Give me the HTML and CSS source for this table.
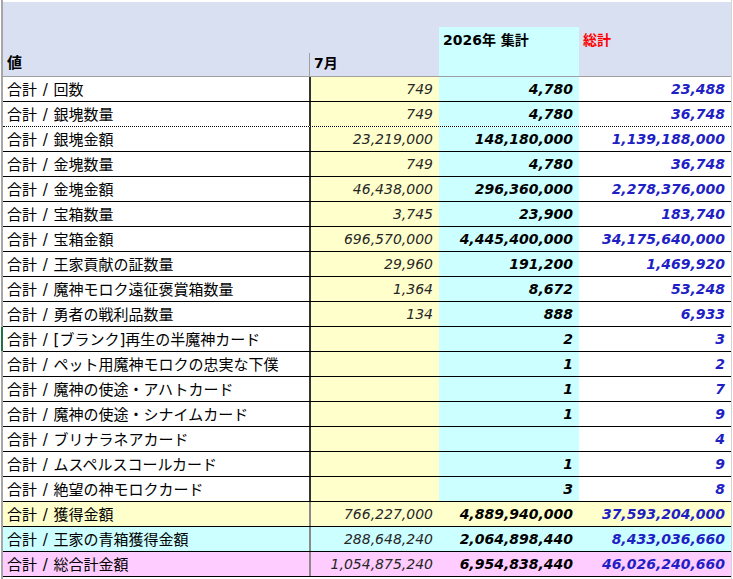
FILE: index.html
```html
<!DOCTYPE html>
<html lang="ja">
<head>
<meta charset="utf-8">
<title>集計</title>
<link rel="stylesheet" href="styles.css">
</head>
<body>
<div class="sheet">
  <div class="head">
    <div class="h h-label">値</div>
    <div class="h h-month">7月</div>
    <div class="h h-top"></div>
    <div class="h h-year">2026年 集計</div>
    <div class="h h-total">総計</div>
  </div>
  <div class="rows">
    <div class="row"><div class="c name">合計 / 回数</div><div class="c m">749</div><div class="c y">4,780</div><div class="c t">23,488</div></div>
    <div class="row dotted"><div class="c name">合計 / 銀塊数量</div><div class="c m">749</div><div class="c y">4,780</div><div class="c t">36,748</div></div>
    <div class="row"><div class="c name">合計 / 銀塊金額</div><div class="c m">23,219,000</div><div class="c y">148,180,000</div><div class="c t">1,139,188,000</div></div>
    <div class="row"><div class="c name">合計 / 金塊数量</div><div class="c m">749</div><div class="c y">4,780</div><div class="c t">36,748</div></div>
    <div class="row"><div class="c name">合計 / 金塊金額</div><div class="c m">46,438,000</div><div class="c y">296,360,000</div><div class="c t">2,278,376,000</div></div>
    <div class="row"><div class="c name">合計 / 宝箱数量</div><div class="c m">3,745</div><div class="c y">23,900</div><div class="c t">183,740</div></div>
    <div class="row"><div class="c name">合計 / 宝箱金額</div><div class="c m">696,570,000</div><div class="c y">4,445,400,000</div><div class="c t">34,175,640,000</div></div>
    <div class="row"><div class="c name">合計 / 王家貢献の証数量</div><div class="c m">29,960</div><div class="c y">191,200</div><div class="c t">1,469,920</div></div>
    <div class="row"><div class="c name">合計 / 魔神モロク遠征褒賞箱数量</div><div class="c m">1,364</div><div class="c y">8,672</div><div class="c t">53,248</div></div>
    <div class="row"><div class="c name">合計 / 勇者の戦利品数量</div><div class="c m">134</div><div class="c y">888</div><div class="c t">6,933</div></div>
    <div class="row"><div class="c name selected">合計 / [ブランク]再生の半魔神カード</div><div class="c m"></div><div class="c y">2</div><div class="c t">3</div></div>
    <div class="row"><div class="c name">合計 / ペット用魔神モロクの忠実な下僕</div><div class="c m"></div><div class="c y">1</div><div class="c t">2</div></div>
    <div class="row"><div class="c name">合計 / 魔神の使途・アハトカード</div><div class="c m"></div><div class="c y">1</div><div class="c t">7</div></div>
    <div class="row"><div class="c name">合計 / 魔神の使途・シナイムカード</div><div class="c m"></div><div class="c y">1</div><div class="c t">9</div></div>
    <div class="row"><div class="c name">合計 / ブリナラネアカード</div><div class="c m"></div><div class="c y"></div><div class="c t">4</div></div>
    <div class="row"><div class="c name">合計 / ムスペルスコールカード</div><div class="c m"></div><div class="c y">1</div><div class="c t">9</div></div>
    <div class="row"><div class="c name">合計 / 絶望の神モロクカード</div><div class="c m"></div><div class="c y">3</div><div class="c t">8</div></div>
    <div class="row sum sum-yellow"><div class="c name">合計 / 獲得金額</div><div class="c m">766,227,000</div><div class="c y">4,889,940,000</div><div class="c t">37,593,204,000</div></div>
    <div class="row sum sum-cyan"><div class="c name">合計 / 王家の青箱獲得金額</div><div class="c m">288,648,240</div><div class="c y">2,064,898,440</div><div class="c t">8,433,036,660</div></div>
    <div class="row sum sum-pink"><div class="c name">合計 / 総合計金額</div><div class="c m">1,054,875,240</div><div class="c y">6,954,838,440</div><div class="c t">46,026,240,660</div></div>
  </div>
</div>
</body>
</html>
```

FILE: styles.css
```css
html, body {
  margin: 0;
  padding: 0;
  background: #ffffff;
}

body {
  font-family: "DejaVu Sans", "Noto Sans CJK JP", sans-serif;
  color: #000000;
}

.sheet {
  margin-left: 1px;
  width: 728px;
  height: 579px;
  border-left: 2px solid #a6a6a6;
  border-right: 1px solid #d4d4d4;
  padding-top: 2px;
  box-sizing: content-box;
}

.head {
  display: grid;
  grid-template-columns: 308px 128px 140px 152px;
  grid-template-rows: 25px 49px;
  background: #d9e0f2;
  border-bottom: 1px solid #a0a0a0;
  font-weight: bold;
  font-size: 14px;
}

.h {
  line-height: 20px;
  white-space: nowrap;
}

.h-label {
  grid-column: 1;
  grid-row: 1 / 3;
  align-self: end;
  padding: 0 0 3px 4px;
  font-size: 15px;
}

.h-month {
  grid-column: 2;
  grid-row: 1 / 3;
  align-self: end;
  padding: 0 0 3px 4px;
  border-left: 1px solid #a0a0a0;
  margin-left: -2px;
}

.h-top {
  grid-column: 3;
  grid-row: 1;
}

.h-year {
  grid-column: 3;
  grid-row: 2;
  background: #ccffff;
  padding: 3px 0 0 4px;
}

.h-total {
  grid-column: 4;
  grid-row: 1 / 3;
  padding: 28px 0 0 4px;
  color: #ff0000;
}

.rows {
  display: flex;
  flex-direction: column;
}

.row {
  display: grid;
  grid-template-columns: 308px 128px 140px 152px;
  height: 25px;
  box-sizing: border-box;
  border-bottom: 1px solid #000000;
}

.row.dotted {
  border-bottom: 1px dotted #000000;
}

.c {
  display: flex;
  align-items: center;
  white-space: nowrap;
  overflow: hidden;
  box-sizing: border-box;
}

.name {
  font-size: 15px;
  padding: 0 0 2px 4px;
  background: #ffffff;
  border-right: 2px solid #333333;
  word-spacing: 1px;
}

.name.selected {
  box-shadow: -2px 0 0 #217346;
}

.m, .y, .t {
  justify-content: flex-end;
  padding: 0 6px 1px 0;
  font-size: 14px;
  font-style: italic;
}

.m {
  background: #ffffcc;
  color: #262626;
}

.y {
  background: #ccffff;
  font-weight: bold;
  color: #000000;
}

.t {
  background: #ffffff;
  font-weight: bold;
  color: #1f1fc4;
}

.sum .name {
  border-right-color: #8a8a8a;
}

.sum-yellow .c {
  background: #ffffcc;
}

.sum-cyan .c {
  background: #ccffff;
}

.sum-pink .c {
  background: #ffccff;
}
```
